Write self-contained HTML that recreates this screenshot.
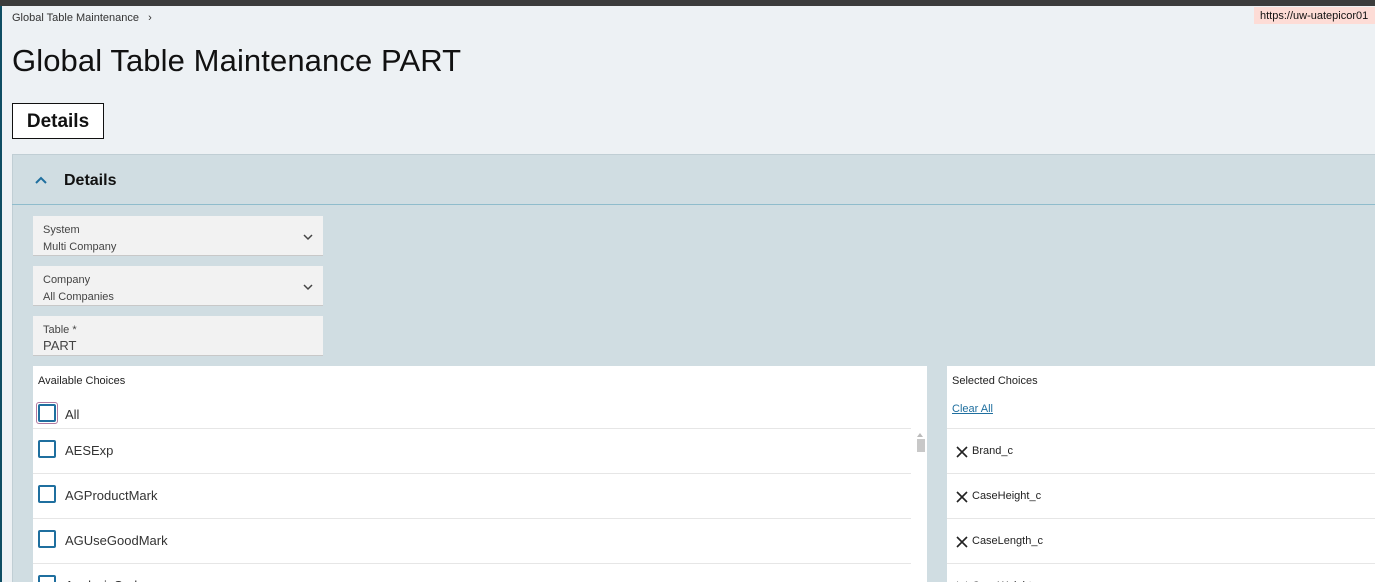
<!DOCTYPE html>
<html style="width:1375px;height:582px;overflow:hidden;background:#edf1f4"><head><style>
*{margin:0;padding:0;box-sizing:border-box}
body{width:1375px;height:582px;overflow:hidden;background:#edf1f4;font-family:"Liberation Sans",sans-serif;position:relative;color:#111}
.abs{position:absolute}
.fld{position:absolute;left:33px;width:290px;height:40px;background:#f2f2f2;border-bottom:1px solid #c8c8c8}
.fld .l{position:absolute;left:10px;top:8px;font-size:11px;color:#444}
.fld .v{position:absolute;left:10px;top:25px;font-size:11px;color:#444}
.fld svg{position:absolute;right:10px;top:17px}
.row{position:absolute;left:0;width:878px;height:45px;border-bottom:1px solid #e6e6e6}
.cb{position:absolute;left:5px;width:18px;height:18px;border:2px solid #1f6f9f;border-radius:2px}
.rt{position:absolute;left:46px;font-size:13px;color:#333}
.srow{position:absolute;left:0;width:428px;height:45px;border-bottom:1px solid #e6e6e6}
.srow .t{position:absolute;left:25px;font-size:11px;color:#222}
.srow svg{position:absolute;left:9px}
</style></head><body>
<div class="abs" style="left:0;top:0;width:1375px;height:6px;background:#3c3c3c"></div>
<div class="abs" style="left:0;top:6px;width:2px;height:576px;background:#0e4d63"></div>
<div class="abs" style="left:12px;top:12px;font-size:11px;color:#333">Global Table Maintenance &nbsp;&nbsp;›</div>
<div class="abs" style="left:1254px;top:7px;width:121px;height:17px;background:#fddcd6;font-size:11px;padding:3px 0 0 6px;white-space:nowrap;overflow:hidden">https://uw-uatepicor01</div>
<div class="abs" style="left:12px;top:43px;font-size:31px;letter-spacing:0.1px;color:#111">Global Table Maintenance PART</div>
<div class="abs" style="left:12px;top:103px;width:92px;height:36px;border:1px solid #111;background:#fff;font-size:19px;font-weight:bold;text-align:center;line-height:36px">Details</div>
<div class="abs" style="left:12px;top:154px;width:1363px;height:428px;background:#d0dde2;border:1px solid #c0ced4;border-right:none;border-bottom:none"></div>
<div class="abs" style="left:12px;top:204px;width:1363px;height:1px;background:#8fbccc"></div>
<svg class="abs" style="left:34px;top:175px" width="14" height="10"><path d="M2 8 L7 3 L12 8" stroke="#1f6f9f" stroke-width="2" fill="none"/></svg>
<div class="abs" style="left:64px;top:172px;font-size:16px;font-weight:bold;color:#111">Details</div>
<div class="fld" style="top:216px"><div class="l">System</div><div class="v">Multi Company</div><svg width="10" height="8"><path d="M1 2 L5 6 L9 2" stroke="#444" stroke-width="1.5" fill="none"/></svg></div>
<div class="fld" style="top:266px"><div class="l">Company</div><div class="v">All Companies</div><svg width="10" height="8"><path d="M1 2 L5 6 L9 2" stroke="#444" stroke-width="1.5" fill="none"/></svg></div>
<div class="fld" style="top:316px"><div class="l">Table *</div><div class="v" style="font-size:13px;top:22px">PART</div></div>
<div class="abs" style="left:33px;top:366px;width:894px;height:216px;background:#fff">
 <div class="abs" style="left:5px;top:9px;font-size:11px;color:#222">Available Choices</div>
 <div class="row" style="top:17px;height:46px"></div>
 <div class="abs" style="left:3px;top:36px;width:22px;height:22px;border:1px solid #b07aa0;border-radius:3px"></div>
 <div class="cb" style="top:38px"></div><div class="rt" style="left:32px;top:41px">All</div>
 <div class="row" style="top:63px"></div><div class="cb" style="top:74px"></div><div class="rt" style="left:32px;top:77px">AESExp</div>
 <div class="row" style="top:108px"></div><div class="cb" style="top:119px"></div><div class="rt" style="left:32px;top:122px">AGProductMark</div>
 <div class="row" style="top:153px"></div><div class="cb" style="top:164px"></div><div class="rt" style="left:32px;top:167px">AGUseGoodMark</div>
 <div class="cb" style="top:209px"></div><div class="rt" style="left:32px;top:212px">AnalysisCode</div>
 <div class="abs" style="left:884px;top:67px;width:0;height:0;border-left:3px solid transparent;border-right:3px solid transparent;border-bottom:4px solid #bbb"></div>
 <div class="abs" style="left:884px;top:73px;width:8px;height:13px;background:#c8c8c8"></div>
</div>
<div class="abs" style="left:947px;top:366px;width:428px;height:216px;background:#fff;overflow:hidden">
 <div class="abs" style="left:5px;top:9px;font-size:11px;color:#222">Selected Choices</div>
 <div class="abs" style="left:5px;top:37px;font-size:11px;color:#1f6f9f;text-decoration:underline">Clear All</div>
 <div class="srow" style="top:17px;height:46px"></div>
 <div class="srow" style="top:63px"><svg width="12" height="12" style="top:17px"><path d="M1 1L11 11M11 1L1 11" stroke="#222" stroke-width="1.6"/></svg><div class="t" style="top:16px">Brand_c</div></div>
 <div class="srow" style="top:108px"><svg width="12" height="12" style="top:17px"><path d="M1 1L11 11M11 1L1 11" stroke="#222" stroke-width="1.6"/></svg><div class="t" style="top:16px">CaseHeight_c</div></div>
 <div class="srow" style="top:153px"><svg width="12" height="12" style="top:17px"><path d="M1 1L11 11M11 1L1 11" stroke="#222" stroke-width="1.6"/></svg><div class="t" style="top:16px">CaseLength_c</div></div>
 <div class="srow" style="top:198px"><svg width="12" height="12" style="top:17px"><path d="M1 1L11 11M11 1L1 11" stroke="#222" stroke-width="1.6"/></svg><div class="t" style="top:16px">CaseWeight_c</div></div>
</div>
</body></html>
